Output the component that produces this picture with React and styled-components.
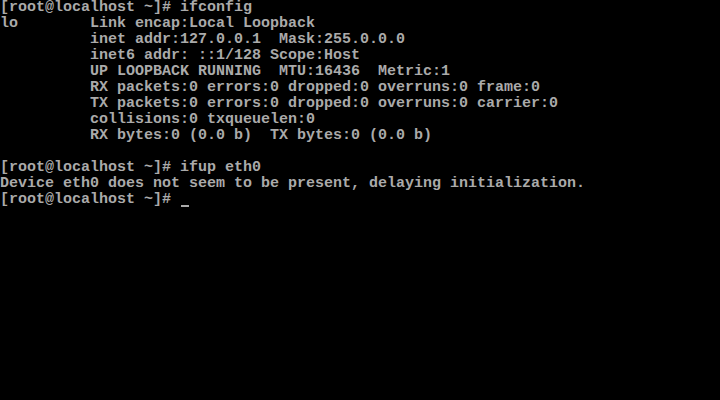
import React from "react";
import styled, { createGlobalStyle } from "styled-components";

const Global = createGlobalStyle`
  html, body { margin: 0; padding: 0; background: #000; }
  #root { width: 720px; height: 400px; }
`;

const Screen = styled.div`
  width: 720px;
  height: 400px;
  background: #000;
  color: #aaaaaa;
  font-family: "Liberation Mono", "DejaVu Sans Mono", monospace;
  font-size: 15px;
  font-weight: bold;
  line-height: 16px;
  overflow: hidden;
  display: flex;
  flex-direction: column;
`;

const Line = styled.div`
  height: 16px;
  white-space: pre;
`;

const Cursor = styled.span`
  display: inline-block;
  width: 8px;
  height: 2px;
  margin-left: 1px;
  background: #aaaaaa;
  vertical-align: top;
  margin-top: 13px;
`;

const lines = [
  "[root@localhost ~]# ifconfig",
  "lo        Link encap:Local Loopback",
  "          inet addr:127.0.0.1  Mask:255.0.0.0",
  "          inet6 addr: ::1/128 Scope:Host",
  "          UP LOOPBACK RUNNING  MTU:16436  Metric:1",
  "          RX packets:0 errors:0 dropped:0 overruns:0 frame:0",
  "          TX packets:0 errors:0 dropped:0 overruns:0 carrier:0",
  "          collisions:0 txqueuelen:0",
  "          RX bytes:0 (0.0 b)  TX bytes:0 (0.0 b)",
  "",
  "[root@localhost ~]# ifup eth0",
  "Device eth0 does not seem to be present, delaying initialization.",
];

export default function App() {
  return (
    <>
      <Global />
      <Screen>
        {lines.map((l, i) => (
          <Line key={i}>{l}</Line>
        ))}
        <Line>
          {"[root@localhost ~]# "}
          <Cursor />
        </Line>
      </Screen>
    </>
  );
}
